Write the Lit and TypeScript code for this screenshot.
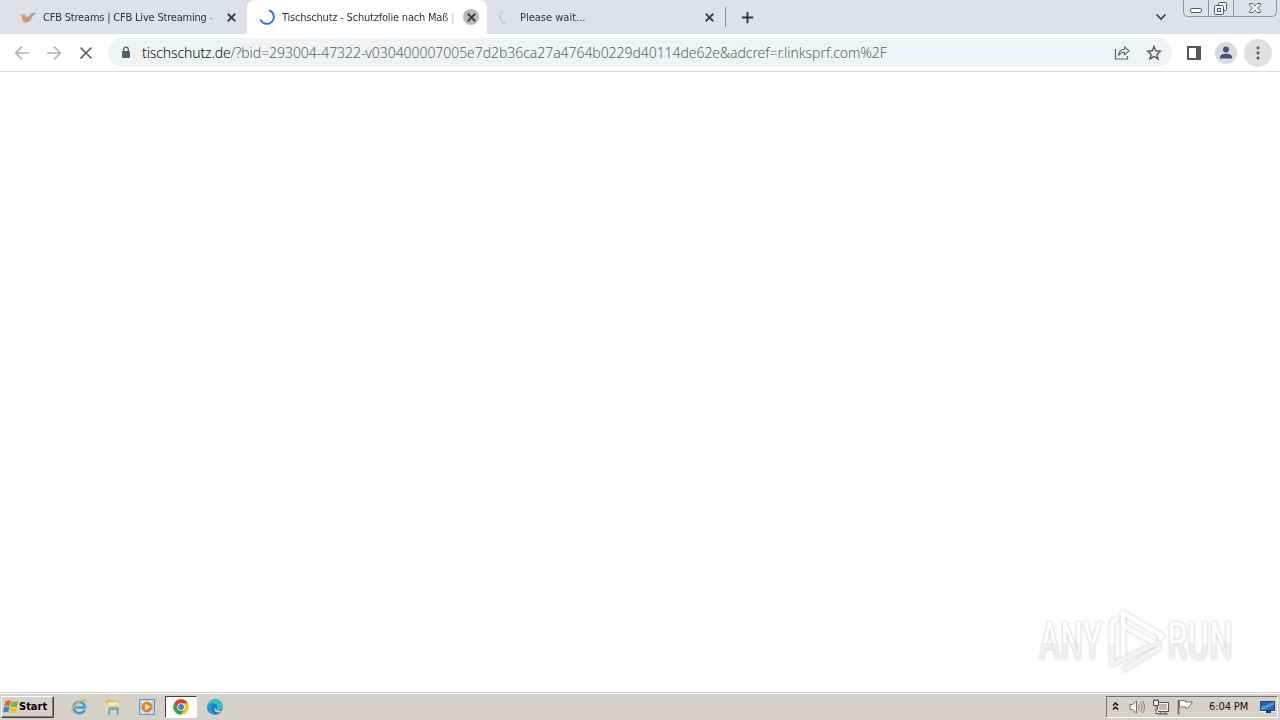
import { LitElement, css, html, svg } from 'lit';
import { customElement, property } from 'lit/decorators.js';

const icons = {
  close: svg`<path d="M4 4l8 8M12 4l-8 8" fill="none" stroke="#3c4043" stroke-width="1.9"/>`,
  stop: svg`<path d="M2.5 2.5l11 11M13.5 2.5l-11 11" fill="none" stroke="#5a5d61" stroke-width="1.7"/>`,
  back: svg`<path d="M15 8H2M8 1.700L1.700 8L8 14.300" fill="none" stroke="#b3b5b8" stroke-width="1.7"/>`,
  forward: svg`<path d="M1 8h13M8 1.700L14.300 8L8 14.300" fill="none" stroke="#b3b5b8" stroke-width="1.7"/>`,
  lock: svg`
    <rect x="4" y="6" width="8" height="7" rx="1" fill="#5b5e62"/>
    <path d="M5.700 6.500V4.500a2.300 2.300 0 0 1 4.600 0v2" fill="none" stroke="#5b5e62" stroke-width="1.3"/>`,
  plus: svg`<path d="M8 2v12M2 8h12" stroke="#303338" stroke-width="2"/>`,
  chevron: svg`<path d="M3.500 5.500L8 10l4.500-4.500" fill="none" stroke="#3c4043" stroke-width="1.7"/>`,
  share: svg`
    <path d="M1.500 4v10h12v-3" fill="none" stroke="#5f6368" stroke-width="1.2"/>
    <path d="M4.500 10.500c.4-4 2.600-6 6-6.200V1.800L15 5.900l-4.500 4V7.300c-2.600 0-4.500 1-6 3.200z" fill="none" stroke="#5f6368" stroke-width="1.1" stroke-linejoin="round"/>`,
  star: svg`<path d="M8 1.400l1.800 4.400 4.700.4-3.600 3.100 1.100 4.600L8 11.400l-4 2.500 1.100-4.600-3.600-3.100 4.700-.4z" fill="none" stroke="#54575c" stroke-width="1.400"/>`,
  panel: svg`
    <rect x="2" y="2" width="12" height="12" fill="none" stroke="#54575c" stroke-width="2"/>
    <path d="M10 2h4v12h-4z" fill="#54575c"/>`,
  dots: svg`<g fill="#54575c"><circle cx="8" cy="2.300" r="1.700"/><circle cx="8" cy="8" r="1.700"/><circle cx="8" cy="13.700" r="1.700"/></g>`,
  spinner: svg`<path d="M10 1.400A6.900 6.900 0 1 1 1.500 10.500" fill="none" stroke="#3273d0" stroke-width="1.900"/>`,
  waiting: svg`<path d="M7.500 1.200A6.900 6.900 0 0 0 9 14.500" fill="none" stroke="#bdcdf0" stroke-width="1.700"/>`,
  cfb: svg`
    <path d="M0 5.500l5-.5 1.500 2 1 4.500-3.500.5z" fill="#c9b3a7"/>
    <path d="M2 7l6 1 1 4-5 1.500z" fill="#d59b71"/>
    <path d="M6.500 13.500C4 13.500 2.500 12 2 10l4-.5C8.500 9 9 5 12 4h4l-1 1.500c-2.500.5-2.800 3-4 5-1 1.800-2.500 3-4.500 3z" fill="#d3976c"/>
    <path d="M7.500 9.500c2-1 2-4.500 8.500-5.500" fill="none" stroke="#a3a4a9" stroke-width="1.200"/>`,
  windows: svg`
    <path d="M2.700 2C4.700.8 6 1 7.900 1.700L6.700 7C5 6.300 3.400 6.200 1.300 7.400z" fill="#e8632b"/>
    <path d="M8.700 2.200c2 .9 4 .9 6.900-.4l-1.500 5.400c-2 1.200-4.400 1-6.600.2z" fill="#7fb63f"/>
    <path d="M1.100 8.300c2-1.200 3.600-1 5.400-.4l-1.300 5.300c-1.700-.7-3.300-.7-5.200.4z" fill="#3c86cf"/>
    <path d="M7.200 8.300c2 .9 4.400 1 6.700-.3l-1.400 5.400c-2 1.200-4.400 1-6.600.2z" fill="#f5c133"/>`,
  explorer: svg`
    <path d="M13.500 11A5.700 5.700 0 1 1 14 8.500H4.500" fill="none" stroke="#3d9fdc" stroke-width="2.700"/>
    <path d="M1.500 14.500C-1 12 3 5 9 2c4-2 6.700-1.700 5.800 1.300" fill="none" stroke="#e7b93c" stroke-width="1.400"/>`,
  folder: svg`
    <path d="M1 1h5l1 1.500h7V13H1z" fill="#dfbd5b"/>
    <path d="M3 3.500h10V8H3z" fill="#f8f1cf"/>
    <path d="M1 5.500h14v7.500H1z" fill="#f1da89"/>
    <path d="M3 15.500V9.500Q3 8 4.500 8h8Q14 8 14 9.500v6h-2.500v-4.300h-6v4.300z" fill="#6caed1"/>`,
  media: svg`
    <rect x=".5" y=".5" width="15" height="15" fill="#b9d7ed" stroke="#5b9bc9"/>
    <rect x="3" y="2" width="10" height="12" fill="#e2eef7"/>
    <circle cx="8" cy="8" r="5.600" fill="#ee8120"/>
    <path d="M6.300 5l5 3-5 3z" fill="#fff"/>`,
  chrome: svg`
    <circle cx="8" cy="8" r="7.700" fill="#fbc116"/>
    <path d="M8 4.300h6.750A7.700 7.700 0 0 0 1.330 4.150L4.800 9.900z" fill="#e33b2e"/>
    <path d="M1.330 4.150A7.700 7.700 0 0 0 8 15.700l3.300-5.800H4.800z" fill="#2da14d"/>
    <circle cx="8" cy="8" r="3.800" fill="#fff"/>
    <circle cx="8" cy="8" r="3" fill="#3f7de8"/>`,
  edge: svg`
    <circle cx="8" cy="8" r="7.700" fill="#1677c6"/>
    <path d="M.3 7.500C1 2.800 4.300.3 8.200.3c4.600 0 7.600 3.200 7.500 6.700 0 2.700-2 4-4.300 4-1.500 0-2.400-.5-1.700-1.500 1.500-2.500-.3-5-3.600-5C3.300 4.500 1 5.800.3 7.500z" fill="#36c2b5"/>
    <path d="M.3 7.500C1.500 5 5 4 7 5c-3 1.500-3.500 6-.5 8.500.8.800 1.700 1.500 2.500 2C4 16.300-.2 12.500.3 7.500z" fill="#1a9be0"/>
    <path d="M8.500 7.500c-1.500 2.500 1.500 5 6 3.900-.5.900-1.200 1.600-1.800 2.100-4 .8-7-2.500-4.200-6z" fill="#d5d1c9"/>`,
  tray: svg`<path d="M5 6.500l2.500-2.500L10 6.500M5 10.500L7.500 8l2.500 2.500" fill="none" stroke="#111" stroke-width="1.500"/>`,
  sound: svg`
    <path d="M1 5.500h2.500L7.500 2v12L3.500 10.500H1z" fill="#f7f6f3" stroke="#77756f"/>
    <path d="M9.500 5.500q1.800 2.500 0 5M11.500 3.500q3.200 4.500 0 9M13.500 2q4 6 0 12" fill="none" stroke="#85837d"/>`,
  network: svg`
    <path d="M4.500 3.500h11v9h-11z" fill="#bdbbb6" stroke="#55534f"/>
    <path d="M5.500 4.500h9v7h-9z" fill="none" stroke="#f6f5f2"/>
    <path d="M8 13v2M12 13v2M5 15h10" stroke="#55534f"/>
    <path d="M.5 1.500h5v5h-5zM3 6.500v8h2.500M1.500 0v2M4.500 0v2" fill="#f6f5f2" stroke="#55534f"/>`,
  flag: svg`
    <path d="M1.500 1v14.500" stroke="#625f59" stroke-width="1.500"/>
    <path d="M2.500 1.500h6V3h7l-2.500 3.500L11.500 9H8.500V8h-6z" fill="#f8f7f4" stroke="#77756f"/>`,
  desktop: svg`
    <path d="M1.500 2.500h14v9h-14z" fill="#2466b5" stroke="#1b4075"/>
    <path d="M2 8L15 3v3L5 11H2z" fill="#4f94dc"/>
    <path d="M1 12.500h6M10 12.500h6" stroke="#f5f5f5"/>
    <path d="M7 13h5" stroke="#1b4075" stroke-width="2"/>`,
};

const icon = (name: keyof typeof icons, size = 16) =>
  html`<svg viewBox="0 0 16 16" width=${size} height=${size} aria-hidden="true">${icons[name]}</svg>`;

@customElement('browser-tab')
export class BrowserTab extends LitElement {
  @property() label = '';
  @property() icon: keyof typeof icons = 'cfb';
  @property({ type: Boolean, reflect: true }) active = false;

  static styles = css`
    :host {
      align-items: center;
      box-sizing: border-box;
      display: flex;
      flex: none;
      height: 34px;
      padding: 0 8px 0 12px;
      width: 240px;
    }

    :host([active]) {
      background: #fff;
      border-radius: 8px 8px 0 0;
    }

    svg {
      display: block;
      flex: none;
    }

    .label {
      color: #303338;
      flex: 1;
      letter-spacing: var(--tab-spacing, -0.2px);
      margin: 0 5px 0 7px;
      overflow: hidden;
      white-space: nowrap;
      -webkit-mask-image: linear-gradient(to right, #000 calc(100% - 14px), transparent);
      mask-image: linear-gradient(to right, #000 calc(100% - 14px), transparent);
    }

    .close {
      align-items: center;
      border-radius: 50%;
      display: flex;
      height: 16px;
      justify-content: center;
      width: 16px;
    }

    :host([active]) .close {
      background: #b9babc;
    }
  `;

  render() {
    return html`
      ${icon(this.icon)}
      <span class="label">${this.label}</span>
      <span class="close">${icon('close', 15)}</span>
    `;
  }
}

@customElement('app-root')
export class AppRoot extends LitElement {
  static styles = css`
    :host {
      background: #fff;
      display: flex;
      flex-direction: column;
      font: 11px 'DejaVu Sans Condensed', 'DejaVu Sans', sans-serif;
      font-stretch: condensed;
      height: 720px;
      overflow: hidden;
      position: relative;
      width: 1280px;
    }

    svg {
      display: block;
      flex: none;
    }

    .strip {
      background: #dee1e8;
      display: flex;
      height: 34px;
      padding-left: 8px;
    }

    .first {
      width: 239px;
    }

    .last {
      --tab-spacing: 0;
      padding: 0 8px 0 10px;
      width: 238px;
    }

    .new-tab {
      align-items: center;
      display: flex;
      gap: 14px;
    }

    .divider {
      background: #8d9096;
      height: 20px;
      width: 1px;
    }

    .search {
      margin: 9px 14px 0 auto;
    }

    .window {
      border: 1px solid #92959b;
      border-radius: 0 0 5px 5px;
      border-top: 0;
      box-sizing: border-box;
      display: flex;
      height: 17px;
      margin-right: 3px;
      width: 94px;
    }

    .toolbar {
      align-items: center;
      border-bottom: 1px solid #d8dadc;
      box-sizing: border-box;
      display: flex;
      height: 38px;
      padding: 0 8px 0 14px;
    }

    .nav {
      display: flex;
      gap: 16px;
      width: 94px;
    }

    .address {
      align-items: center;
      background: #f0f3f5;
      border-radius: 15px;
      box-sizing: border-box;
      display: flex;
      height: 29px;
      padding: 0 10px;
      width: 1064px;
    }

    .url {
      color: #5b5f64;
      flex: 1;
      font: 300 14px 'Noto Sans', sans-serif;
      letter-spacing: -0.055px;
      margin-left: 8px;
      white-space: nowrap;
    }

    .host {
      color: #0c0e12;
      letter-spacing: -0.12px;
    }

    .actions {
      display: flex;
      gap: 16px;
    }

    .panel {
      margin-left: 14px;
    }

    .avatar {
      margin-left: 13px;
    }

    .menu {
      align-items: center;
      background: #e0e0e1;
      border-radius: 50%;
      display: flex;
      height: 28px;
      justify-content: center;
      margin-left: 7px;
      width: 28px;
    }

    .page {
      flex: 1;
    }

    .watermark {
      left: 1028px;
      overflow: visible;
      position: absolute;
      top: 602px;
    }

    .taskbar {
      align-items: center;
      background: #d5d1c9;
      border-top: 1px solid #d5d1c9;
      box-shadow: inset 0 1px #fff;
      box-sizing: border-box;
      display: flex;
      height: 28px;
      padding: 1px 2px 1px 1px;
    }

    .start {
      align-items: center;
      border: 1px solid;
      border-color: #fff #404040 #404040 #fff;
      box-shadow: inset -1px -1px #858179;
      box-sizing: border-box;
      color: #000;
      display: flex;
      font-size: 11px;
      font-weight: bold;
      height: 22px;
      padding-left: 1px;
      width: 53px;
    }

    .apps {
      align-items: center;
      display: flex;
      gap: 2px;
      margin-left: 9px;
    }

    .app {
      align-items: center;
      border: 1px solid transparent;
      box-sizing: border-box;
      display: flex;
      height: 22px;
      justify-content: center;
      width: 32px;
    }

    .pressed {
      background: #fff;
      border-color: #404040 #fff #fff #404040;
    }

    .tray {
      align-items: center;
      border: 1px solid;
      border-color: #77746e #fff #fff #77746e;
      box-sizing: border-box;
      color: #111;
      display: flex;
      height: 22px;
      margin-left: auto;
      padding-left: 1px;
      width: 172px;
    }

    .tray-icons {
      display: flex;
      gap: 8px;
      margin-left: 5px;
    }

    .clock {
      letter-spacing: -0.1px;
      margin-left: 16px;
      white-space: nowrap;
      width: 50px;
    }
  `;

  renderWindowButtons() {
    return html`
      <div class="window">
        <svg viewBox="0 0 92 16" width="92" height="16" aria-hidden="true">
          <g fill="none" stroke="#565a61">
            <path d="M24.500 0v16M49.500 0v16" stroke="#92959b"/>
            <rect x="6.500" y="8.500" width="11" height="4" rx="1.500" fill="#fafafa"/>
            <rect x="34.500" y="2.500" width="8" height="8" rx="1" fill="#f6f7f8"/>
            <rect x="30.500" y="5.500" width="9" height="9" rx="1" fill="#f6f7f8"/>
            <rect x="33.500" y="8.500" width="3" height="3"/>
            <path d="M65.500 3.500h3.500l2 2.400 2-2.400h3.500v1.500l-3 3 3 3.200v1.300H73l-2-2.300-2 2.300h-3.500v-1.300l3-3.200-3-3z" fill="#f6f7f8"/>
          </g>
        </svg>
      </div>
    `;
  }

  renderWatermark() {
    return html`
      <svg class="watermark" width="216" height="78" viewBox="0 0 216 78">
        <defs>
          <linearGradient id="fade" x1="0" y1="20" x2="0" y2="58" gradientUnits="userSpaceOnUse">
            <stop offset="0.54" stop-color="#fff"/>
            <stop offset="0.54" stop-color="#f0f0f0"/>
          </linearGradient>
          <filter id="glow" x="-10%" y="-20%" width="120%" height="140%">
            <feDropShadow dx="0" dy="0" stdDeviation="1.800" flood-color="#777" flood-opacity="0.5"/>
          </filter>
        </defs>
        <g filter="url(#glow)" fill="url(#fade)">
          <g font-family="Roboto, sans-serif" font-size="51">
            <text x="11" y="57" textLength="63" lengthAdjust="spacingAndGlyphs">ANY</text>
            <text x="139" y="57" textLength="66" lengthAdjust="spacingAndGlyphs">RUN</text>
          </g>
          <g fill="none" stroke="#fefefe" stroke-width="4.500" stroke-linejoin="round">
            <path d="M95 55V11l39 23-2 4"/>
            <path d="M96 24l34 19"/>
            <path d="M90 16l-6 4v24"/>
            <path d="M84 42v20l7-3 41-19M95 68l38-23" stroke="#f3f3f3"/>
          </g>
        </g>
      </svg>
    `;
  }

  render() {
    return html`
      <div class="strip">
        <browser-tab class="first" icon="cfb" label="CFB Streams | CFB Live Streaming - CFB"></browser-tab>
        <browser-tab active icon="spinner" label="Tischschutz - Schutzfolie nach Maß | T"></browser-tab>
        <browser-tab class="last" icon="waiting" label="Please wait..."></browser-tab>
        <div class="new-tab"><span class="divider"></span>${icon('plus', 15)}</div>
        <div class="search">${icon('chevron')}</div>
        ${this.renderWindowButtons()}
      </div>

      <div class="toolbar">
        <div class="nav">${icon('back')}${icon('forward')}${icon('stop')}</div>
        <div class="address">
          ${icon('lock')}
          <div class="url"><span class="host">tischschutz.de</span>/?bid=293004-47322-v030400007005e7d2b36ca27a4764b0229d40114de62e&amp;adcref=r.linksprf.com%2F</div>
          <div class="actions">${icon('share')}${icon('star')}</div>
        </div>
        <div class="panel">${icon('panel')}</div>
        <svg class="avatar" viewBox="0 0 22 22" width="22" height="22" aria-hidden="true">
          <circle cx="11" cy="11" r="11" fill="#d7dbe2"/>
          <circle cx="11" cy="7.500" r="3" fill="#475574"/>
          <path d="M5 16.500v-1.700c0-4 12-4 12 0v1.700z" fill="#475574"/>
        </svg>
        <div class="menu">${icon('dots', 14)}</div>
      </div>

      <div class="page"></div>
      ${this.renderWatermark()}

      <div class="taskbar">
        <div class="start">${icon('windows')}Start</div>
        <div class="apps">
          <span class="app">${icon('explorer')}</span>
          <span class="app">${icon('folder')}</span>
          <span class="app">${icon('media')}</span>
          <span class="app pressed">${icon('chrome')}</span>
          <span class="app">${icon('edge')}</span>
        </div>
        <div class="tray">
          ${icon('tray')}
          <div class="tray-icons">${icon('sound')}${icon('network')}${icon('flag')}</div>
          <span class="clock">6:04 PM</span>
          ${icon('desktop')}
        </div>
      </div>
    `;
  }
}
